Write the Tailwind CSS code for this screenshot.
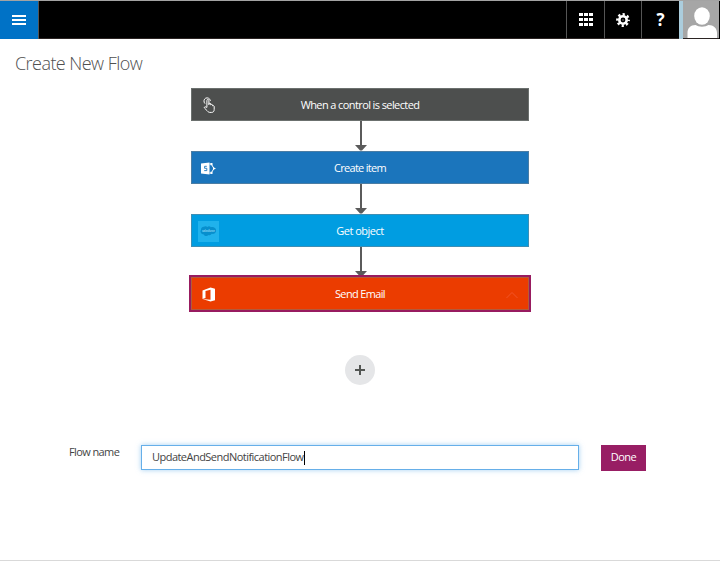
<!DOCTYPE html>
<html lang="en">
<head>
<meta charset="utf-8">
<title>Create New Flow</title>
<script src="https://cdn.jsdelivr.net/npm/@tailwindcss/browser@4"></script>
</head>
<body class="bg-white">
<div class="flex h-[561px] w-[720px] flex-col overflow-hidden border-b border-[#d9d9d9] bg-white font-['Open_Sans','Noto_Sans',sans-serif] text-[11px] text-[#444]">
  <header class="flex h-[39px] shrink-0 border-t border-[#a3a3a3] bg-black">
    <button class="flex w-[39px] items-center border-r border-[#555] bg-[#0072c6] pl-3" aria-label="Menu">
      <svg width="14" height="12" viewBox="0 0 14 12" fill="#fff"><path d="M0 1h14v2H0zM0 5h14v2H0zM0 9h14v2H0z"/></svg>
    </button>
    <div class="flex-1 border-b border-[#2b2423]"></div>
    <button class="flex w-[38px] items-center justify-center border-b border-l border-b-[#2b2423] border-l-[#555]" aria-label="Apps">
      <svg width="14" height="13" viewBox="0 0 14 13" fill="#fff"><path d="M0 0h4v3H0zM5 0h4v3H5zM10 0h4v3h-4zM0 5h4v3H0zM5 5h4v3H5zM10 5h4v3h-4zM0 10h4v3H0zM5 10h4v3H5zM10 10h4v3h-4z"/></svg>
    </button>
    <button class="flex w-[37px] items-center justify-center border-b border-l border-b-[#2b2423] border-l-[#555]" aria-label="Settings">
      <svg width="14" height="14" viewBox="0 0 14 14" fill="none" stroke="#fff"><circle cx="7" cy="7" r="3.7" stroke-width="2.6"/><circle cx="7" cy="7" r="5.7" stroke-width="2.4" stroke-dasharray="2.24 2.24" stroke-dashoffset="1.12"/><circle cx="7" cy="7" r=".8" fill="#888" stroke="none"/></svg>
    </button>
    <button class="flex w-[38px] items-center justify-center border-b border-l border-b-[#2b2423] border-l-[#555] pb-px text-[17px] leading-none font-bold text-white" aria-label="Help">?</button>
    <div class="h-[38px] w-1 bg-[#abcddd]"></div>
    <div class="h-[38px] w-9 border-b border-[#2b2423] bg-[#a6a6a6]">
      <svg width="36" height="37" viewBox="0 0 36 37" fill="#fff"><ellipse cx="19" cy="15" rx="7.8" ry="8.8"/><path d="M4.500 37v-5c0-5 3-8 8-8q2.500 1.800 6.500 1.800T25.500 24c5 0 8.500 3 8.500 8v5z"/></svg>
    </div>
    <div class="w-px bg-black"></div>
  </header>

  <main class="flex flex-1 flex-col">
    <h1 class="h-[49px] pt-[12px] pl-[15px] text-[18px] leading-6 font-light tracking-[-0.55px] text-[#505050]">Create New Flow</h1>

    <section class="flex flex-col items-center text-white">
      <div class="relative flex h-[33px] w-[338px] items-center justify-center border border-[#6b706e] bg-[#4d4f4e]">
        <svg class="absolute top-[8px] left-[11px]" width="14" height="17" viewBox="0 0 14 17" fill="none" stroke="#fff" stroke-width="1" stroke-linejoin="round" stroke-linecap="round"><path d="M1.700 6.300A3.300 3.300 0 1 1 7.400 3.400"/><path d="M3.900 10V3.500a1 1 0 0 1 2 0v4.200V6.600q1-.8 1.800 0v1.300q1-.9 1.900 0v.9q1.300-.5 1.600.6v3c0 2-1 3-2.500 3H6.800c-1 0-1.700-.6-2.500-1.500L1.400 11c-.4-1 .7-1.700 1.500-1z"/></svg>
        <span class="pt-[2px] tracking-[-0.6px]">When a control is selected</span>
      </div>
      <svg class="ml-[2px]" width="12" height="30" viewBox="0 0 12 30" fill="#5b5b5b"><path d="M5 0h2v24h5l-5 5.500H5L0 24h5z"/></svg>
      <div class="relative flex h-[33px] w-[338px] items-center justify-center border border-[#4b7da4] bg-[#1b75bc]">
        <svg class="absolute top-[10px] left-[9px]" width="15" height="13" viewBox="0 0 15 13"><path d="M0 1.500 8.500.5v12L0 11.500z" fill="#fff"/><path d="M5.800 4.300H3.600v2h2.200v2.300H3.200" fill="none" stroke="#1b75bc" stroke-width=".9"/><path d="M8.500 2h1.800l2.600 4.500-2.600 4.500H8.500" fill="none" stroke="#fff" stroke-width="1"/><path d="M9.500 1h2v2.200h-2zM12 5l3 1.500L12 8zM9.500 9.800h2V12h-2z" fill="#fff"/></svg>
        <span class="pt-[2px] tracking-[-0.7px]">Create item</span>
      </div>
      <svg class="ml-[2px]" width="12" height="30" viewBox="0 0 12 30" fill="#5b5b5b"><path d="M5 0h2v24h5l-5 5.500H5L0 24h5z"/></svg>
      <div class="relative flex h-[33px] w-[338px] items-center justify-center border border-[#3e8eb4] bg-[#009de1]">
        <svg class="absolute top-[6px] left-[6px]" width="21" height="21" viewBox="0 0 21 21"><path fill="#20b2ec" d="M0 0h21v21H0z"/><path fill="#078fcd" d="M3 9c-.2-2 1-3.300 2.800-3.300 1.300-.9 2.700-.7 3.600.3 1-1 2.600-.8 3.500.3 2-1 5.300.5 5.200 3.200 0 2.500-2 3.700-4.400 3.300-.7 1.300-2 1.800-3.300 1.200-1.300 1.700-3.800 1.300-4.600-.6C3.300 13.400 1.600 10.600 3 9z"/><text x="4" y="11" fill="#76c9ed" font-size="3.200" font-weight="700" textLength="13">salesforce</text></svg>
        <span class="pt-[2px] tracking-[-0.5px]">Get object</span>
      </div>
      <svg class="ml-[2px]" width="12" height="30" viewBox="0 0 12 30" fill="#5b5b5b"><path d="M5 0h2v24h5l-5 5.500H5L0 24h5z"/></svg>
      <div class="relative flex h-[33px] w-[338px] items-center justify-center border border-[#b15b3c] bg-[#eb3c00] outline-2 outline-[#981b60]">
        <svg class="absolute top-[9px] left-[10px]" width="14" height="15" viewBox="0 0 14 15" fill="#fff" fill-rule="evenodd"><path d="M.5 3.500 8.500.5 13 1.800v11.400L8.500 14.500.5 12l8 .8V2.700L3.500 4v7l-3 1z"/></svg>
        <span class="pt-[2px] tracking-[-0.65px]">Send Email</span>
        <svg class="absolute top-[13px] left-[314px]" width="12" height="8" viewBox="0 0 12 8" fill="none" stroke="#f15528"><path d="M.5 7 6 1.500 11.500 7"/></svg>
      </div>
      <button class="mt-[45px] flex size-[30px] items-center justify-center rounded-full bg-[#e5e6e8]" aria-label="Add step">
        <svg width="10" height="10" viewBox="0 0 10 10" fill="#535654"><path d="M4 0h2v4h4v2H6v4H4V6H0V4h4z"/></svg>
      </button>
    </section>

    <section class="mt-[60px] flex items-start">
      <label class="w-[141px] pl-[69px] leading-[14px] tracking-[-0.6px]">Flow name</label>
      <div class="flex h-[25px] w-[438px] items-center border border-[#66afe9] pl-[10px] shadow-[0_0_5px_rgba(102,175,233,0.6)]">
        <span class="tracking-[-0.53px]">UpdateAndSendNotificationFlow</span><span class="h-[14px] w-px bg-black"></span>
      </div>
      <button class="ml-[22px] h-[26px] w-[45px] bg-[#981e64] pb-[2px] tracking-[-0.5px] text-white">Done</button>
    </section>
  </main>
</div>
</body>
</html>
